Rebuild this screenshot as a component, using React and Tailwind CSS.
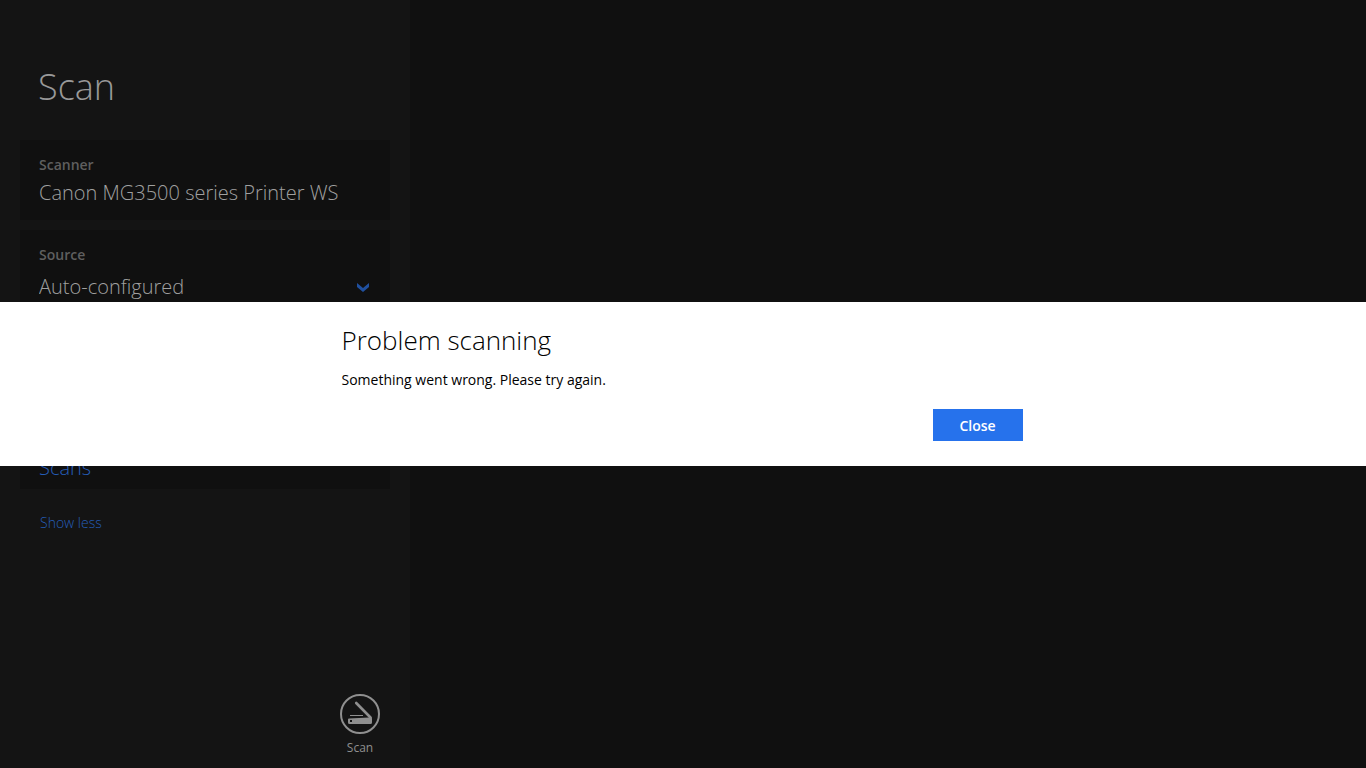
import { useState } from 'react';

function Card({ children, className = '' }) {
  return <section className={`bg-[#101010] px-[19px] ${className}`}>{children}</section>;
}

function ScannerIcon() {
  return (
    <svg viewBox="0 0 40 40" className="size-10" fill="none" aria-hidden="true">
      <circle cx="20" cy="20" r="19" stroke="#8f8f8f" strokeWidth="2" />
      <path d="M10 21.5H23" stroke="#8f8f8f" strokeWidth="1" />
      <path d="M16.2 9L30.5 23.5" stroke="#8f8f8f" strokeWidth="2.6" strokeLinecap="round" />
      <path d="M9 24.5L29 23.5L31.5 23.3Q32 24 32 25V28.5Q32 30 30.5 30H9.5Q8 30 8 28.5V25.5Q8 24.5 9 24.5Z" fill="#8f8f8f" />
      <path d="M10 26H12V28H10Z" fill="#131313" />
    </svg>
  );
}

function Sidebar() {
  return (
    <aside className="flex min-h-screen w-[410px] flex-col bg-[#141414] px-5">
      <h1 className="mt-[60px] pl-[18px] text-[36px] leading-[54px] font-light text-[#999999]">Scan</h1>

      <div className="mt-[26px] flex flex-col gap-[10px]">
        <Card className="h-20 pt-[14px]">
          <h2 className="text-[14px] leading-[22px] font-semibold text-[#5f5f5f]">Scanner</h2>
          <p className="mt-1 text-[20px] leading-[26px] font-light whitespace-nowrap text-[#a0a0a0]">
            Canon MG3500 series Printer WS
          </p>
        </Card>

        <Card className="h-20 pt-[14px]">
          <label htmlFor="source" className="block text-[14px] leading-[22px] font-semibold text-[#5f5f5f]">
            Source
          </label>
          <div className="mt-2 grid items-center">
            <select
              id="source"
              className="col-start-1 row-start-1 w-full appearance-none bg-transparent text-[20px] leading-[26px] font-light text-[#a0a0a0]"
            >
              <option>Auto-configured</option>
            </select>
            <svg
              viewBox="0 0 14 9"
              className="pointer-events-none col-start-1 row-start-1 h-[9px] w-[14px] justify-self-end"
              aria-hidden="true"
            >
              <path d="M0 0L6 5L12 0V4L6 9L0 4Z" fill="#20509f" />
            </svg>
          </div>
        </Card>

        <Card className="mt-[80px] flex h-[89px] items-end pb-2">
          <a href="#scans" className="text-[20px] leading-[26px] font-light text-[#255db8]">
            Scans
          </a>
        </Card>
      </div>

      <button type="button" className="mt-[23px] ml-5 self-start text-[14px] leading-[22px] font-light text-[#255db8]">
        Show less
      </button>

      <button type="button" className="mt-auto mr-[10px] mb-[10px] flex w-10 flex-col items-center self-end">
        <ScannerIcon />
        <span className="mt-1 text-[12px] leading-5 text-[#8f8f8f]">Scan</span>
      </button>
    </aside>
  );
}

function ErrorDialog({ onClose }) {
  return (
    <div className="fixed inset-0 flex items-center">
      <div role="alertdialog" aria-labelledby="dialog-title" className="w-full bg-white pt-5 pb-[25px]">
        <div className="mx-auto flex w-1/2 flex-col pr-[2px]">
          <h2 id="dialog-title" className="text-[26px] leading-[36px] font-light text-black">
            Problem scanning
          </h2>
          <p className="mt-[11px] text-[14px] leading-[22px] text-black">
            Something went wrong. Please try again.
          </p>
          <button
            type="button"
            onClick={onClose}
            className="mt-[18px] h-8 w-[90px] self-end bg-[#2672ec] text-[14px] font-semibold text-white"
          >
            Close
          </button>
        </div>
      </div>
    </div>
  );
}

export default function App() {
  const [open, setOpen] = useState(true);

  return (
    <main className="min-h-screen bg-[#101010] font-['Open_Sans','Noto_Sans',sans-serif]">
      <Sidebar />
      {open && <ErrorDialog onClose={() => setOpen(false)} />}
    </main>
  );
}
